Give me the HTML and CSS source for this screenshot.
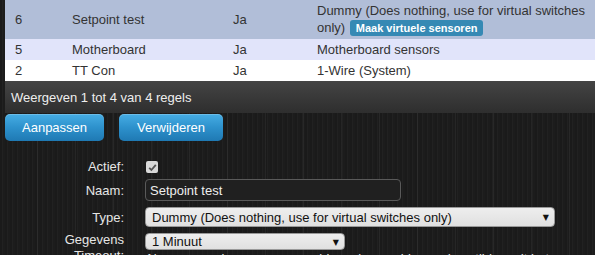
FILE: index.html
```html
<!DOCTYPE html>
<html lang="nl">
  <head>
    <meta charset="UTF-8" />
    <meta name="viewport" content="width=device-width, initial-scale=1.0" />
    <title>Hardware</title>
    <link rel="stylesheet" href="styles.css">
  </head>
  <body>
    <div class="table-wrap">
      <table class="hw-table">
        <colgroup>
          <col class="col-idx" />
          <col class="col-name" />
          <col class="col-enabled" />
          <col class="col-type" />
        </colgroup>
        <tbody>
          <tr class="row-selected">
            <td>6</td>
            <td>Setpoint test</td>
            <td>Ja</td>
            <td>Dummy (Does nothing, use for virtual switches only) <span class="badge">Maak virtuele sensoren</span></td>
          </tr>
          <tr class="row-even">
            <td>5</td>
            <td>Motherboard</td>
            <td>Ja</td>
            <td>Motherboard sensors</td>
          </tr>
          <tr class="row-odd">
            <td>2</td>
            <td>TT Con</td>
            <td>Ja</td>
            <td>1-Wire (System)</td>
          </tr>
        </tbody>
      </table>
      <div class="table-info">Weergeven 1 tot 4 van 4 regels</div>
    </div>

    <div class="actions">
      <button class="btn">Aanpassen</button>
      <button class="btn">Verwijderen</button>
    </div>

    <form class="hw-form">
      <label class="form-label label-short">Actief:</label>
      <div class="form-field">
        <span class="checkbox">
          <svg width="9" height="9" viewBox="0 0 9 9">
            <path d="M1.2 4.8 L3.4 7 L7.8 1.8" fill="none" stroke="#555" stroke-width="1.8" />
          </svg>
        </span>
      </div>

      <label class="form-label">Naam:</label>
      <div class="form-field">
        <input class="text-input" type="text" value="Setpoint test" />
      </div>

      <label class="form-label">Type:</label>
      <div class="form-field">
        <div class="select select-wide">
          <span>Dummy (Does nothing, use for virtual switches only)</span>
          <span class="arrow">&#9660;</span>
        </div>
      </div>

      <label class="form-label label-multi">Gegevens<br />Timeout:</label>
      <div class="form-field field-multi">
        <div class="select select-small">
          <span>1 Minuut</span>
          <span class="arrow">&#9660;</span>
        </div>
        <p class="help">Als er geen nieuwe gegevens binnenkomen binnen deze tijd wordt het apparaat rood</p>
      </div>
    </form>
  </body>
</html>
```

FILE: styles.css
```css
* {
  margin: 0;
  padding: 0;
  box-sizing: border-box;
}

html,
body {
  overflow: hidden;
}

body {
  font-family: "Liberation Sans", Arial, sans-serif;
  font-size: 13px;
  color: #333;
  height: 255px;
  background-color: #1b1b1b;
  background-image:
    repeating-linear-gradient(90deg, transparent 0, transparent 37px, rgba(255, 255, 255, 0.05) 37px, rgba(255, 255, 255, 0.05) 38px),
    repeating-linear-gradient(90deg, #1a1a1a 0, #1a1a1a 2px, #212121 2px, #212121 3px, #1c1c1c 3px, #1c1c1c 5px);
}

.table-wrap {
  margin-left: 5px;
  width: 607px;
}

.hw-table {
  width: 607px;
  border-collapse: collapse;
  table-layout: fixed;
}

.col-idx {
  width: 57px;
}

.col-name {
  width: 161px;
}

.col-enabled {
  width: 84px;
}

.col-type {
  width: 305px;
}

.hw-table td {
  padding: 3px 10px;
  line-height: 15px;
  vertical-align: middle;
}

.row-selected td {
  background: #b1bed8;
  line-height: 17px;
  padding-top: 2px;
  padding-bottom: 3px;
}

.row-even td {
  background: #e1e4fa;
}

.row-odd td {
  background: #fff;
}

.badge {
  display: inline-block;
  margin-left: 1px;
  padding: 1px 6px;
  background: #3589b4;
  color: #fff;
  font-size: 11px;
  font-weight: bold;
  line-height: 14px;
  border-radius: 3px;
}

.table-info {
  height: 32px;
  padding: 0 6px;
  line-height: 33px;
  color: #eee;
  background: linear-gradient(#444 0%, #393939 50%, #2e2e2e 100%);
}

.actions {
  display: flex;
  gap: 15px;
  margin: 1px 0 0 5px;
}

.btn {
  height: 27px;
  padding: 0 17px;
  border: none;
  border-radius: 5px;
  font-family: inherit;
  font-size: 13px;
  color: #fff;
  background: linear-gradient(#46ade4 0%, #2d91cc 50%, #1f79b3 100%);
  box-shadow: inset 0 1px 0 rgba(255, 255, 255, 0.2);
}

.btn + .btn {
  padding: 0 18px;
}

.hw-form {
  display: grid;
  grid-template-columns: 124px 1fr;
  column-gap: 21px;
  row-gap: 6px;
  margin-top: 20px;
}

.form-label {
  color: #e6e6e6;
  text-align: right;
  align-self: center;
  line-height: 15px;
}

.label-short {
  line-height: 12px;
}

.label-multi {
  align-self: start;
  line-height: 16px;
  margin-top: -1px;
}

.form-field {
  display: flex;
  align-items: center;
}

.field-multi {
  flex-direction: column;
  align-items: flex-start;
}

.checkbox {
  display: flex;
  align-items: center;
  justify-content: center;
  width: 12px;
  height: 12px;
  margin-left: 1px;
  background: #d9d9d9;
  border-radius: 2px;
}

.text-input {
  width: 256px;
  height: 22px;
  padding: 0 4px;
  font-family: inherit;
  font-size: 13px;
  color: #eee;
  background: #202020;
  border: 1px solid #5a5a5a;
  border-radius: 4px;
  outline: none;
}

.select {
  position: relative;
  display: flex;
  align-items: center;
  padding: 0 6px;
  color: #111;
  background: linear-gradient(#eee, #e0e0e0);
  border: 1px solid #999;
  border-radius: 4px;
}

.select-wide {
  width: 410px;
  height: 20px;
}

.select-small {
  width: 200px;
  height: 17px;
}

.arrow {
  position: absolute;
  right: 5px;
  top: 50%;
  transform: translateY(-50%);
  font-family: "DejaVu Sans", sans-serif;
  font-size: 8px;
  color: #111;
}

.help {
  margin-top: 1px;
  color: #e6e6e6;
  line-height: 16px;
  white-space: nowrap;
}
```
